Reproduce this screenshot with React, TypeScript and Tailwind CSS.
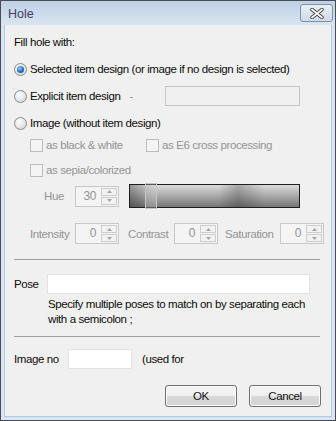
import type { ReactNode } from 'react'

const grayText = 'text-[#949494]'

function Radio({ checked }: { checked?: boolean }) {
  return (
    <span className="flex h-[13px] w-[13px] shrink-0 items-center justify-center rounded-full border border-[#8a8a8a] bg-[radial-gradient(circle_at_40%_35%,#ffffff,#e2e2e2_60%,#cfcfcf)]">
      {checked ? (
        <span className="h-[7px] w-[7px] rounded-full bg-[radial-gradient(circle_at_40%_35%,#8fd2ff,#1f6fc0_55%,#0d3f80)]" />
      ) : null}
    </span>
  )
}

function Check() {
  return <span className="h-[13px] w-[13px] shrink-0 border border-[#bcbcbc] bg-[#f4f4f4]" />
}

function Arrow({ up }: { up?: boolean }) {
  return (
    <svg width="5" height="3" viewBox="0 0 5 3">
      <path d={up ? 'M0 3 L2.5 0 L5 3 Z' : 'M0 0 L2.5 3 L5 0 Z'} fill="#a4a4a4" />
    </svg>
  )
}

function Spinner({ value, className }: { value: string; className?: string }) {
  return (
    <div
      className={`flex h-[21px] w-[44px] shrink-0 border border-[#c6c9cc] bg-[#f4f4f4] ${className ?? ''}`}
    >
      <div className={`flex-1 pr-[5px] text-right text-[12px] leading-[19px] ${grayText}`}>{value}</div>
      <div className="flex w-[17px] flex-col gap-[1px] py-[1px] pr-[1px]">
        <div className="flex flex-1 items-center justify-center border border-[#cdcdcd] bg-[#f2f2f2]">
          <Arrow up />
        </div>
        <div className="flex flex-1 items-center justify-center border border-[#cdcdcd] bg-[#f2f2f2]">
          <Arrow />
        </div>
      </div>
    </div>
  )
}

function Button({ children }: { children: ReactNode }) {
  return (
    <button
      type="button"
      className="h-[22px] w-[72px] rounded-[3px] border border-[#707070] bg-linear-to-b from-[#f2f2f2] from-45% to-[#d6d6d6] to-55% leading-[20px] text-[#111] shadow-[inset_0_0_0_1px_#fcfcfc]"
    >
      {children}
    </button>
  )
}

export default function App() {
  return (
    <div className="flex h-[421px] w-[336px] flex-col whitespace-nowrap border border-[#4c4c4c] bg-[#d9e5f2] font-['Liberation_Sans',Arial,sans-serif] text-[11.5px] leading-[16px] tracking-[-0.4px] text-[#0d0d0d]">
      {/* title bar */}
      <div className="flex h-[24px] shrink-0 items-start justify-between bg-linear-to-b from-[#c0d1e6] to-[#d8e4f1] pl-[7px] pr-[2px]">
        <div className="pt-[5px] text-[12.5px] leading-[16px] tracking-normal text-[#3f3f5e]">Hole</div>
        <div className="mt-[3px] flex h-[18px] w-[33px] items-center justify-center rounded-[3px] border border-[#7f8ea6] bg-linear-to-b from-[#e9eff6] to-[#cfdbea]">
          <svg width="14" height="11" viewBox="0 0 14 11">
            <path d="M2 1.5 L12 9.5 M12 1.5 L2 9.5" stroke="#4a4a4a" strokeWidth="3.6" strokeLinecap="round" />
            <path d="M2 1.5 L12 9.5 M12 1.5 L2 9.5" stroke="#f4f4f4" strokeWidth="1.8" strokeLinecap="round" />
          </svg>
        </div>
      </div>

      {/* body */}
      <div className="mx-[3px] mb-[3px] flex flex-1 flex-col border-x border-b border-[#b4c8df] bg-[#f0f0f0] pl-[9px] pt-[9px]">
        <div>Fill hole with:</div>

        <div className="mt-[11px] flex h-[16px] items-center gap-[3px]">
          <Radio checked />
          <span>Selected item design (or image if no design is selected)</span>
        </div>

        <div className="mt-[9px] flex h-[20px] items-center">
          <div className="flex w-[151px] items-center gap-[3px]">
            <Radio />
            <span>Explicit item design</span>
            <span className={`ml-[6px] ${grayText}`}>-</span>
          </div>
          <div className="h-[20px] w-[135px] border border-[#c2c6ca] bg-[#f0f0f0]" />
        </div>

        <div className="mt-[9px] flex h-[16px] items-center gap-[3px]">
          <Radio />
          <span>Image (without item design)</span>
        </div>

        <div className={`mt-[6px] flex h-[16px] items-center pl-[16px] ${grayText}`}>
          <div className="flex w-[116px] items-center gap-[3px]">
            <Check />
            <span>as black &amp; white</span>
          </div>
          <div className="flex items-center gap-[3px]">
            <Check />
            <span>as E6 cross processing</span>
          </div>
        </div>

        <div className={`mt-[9px] flex h-[16px] items-center gap-[3px] pl-[16px] ${grayText}`}>
          <Check />
          <span>as sepia/colorized</span>
        </div>

        <div className="mt-[5px] flex h-[26px] items-center">
          <div className={`w-[61px] pr-[11px] text-right ${grayText}`}>Hue</div>
          <Spinner value="30" />
          <div className="relative ml-[10px] h-[24px] w-[171px] border border-[#1e1e1e] bg-[linear-gradient(to_right,rgba(0,0,0,0.3)_0%,rgba(0,0,0,0)_14%,rgba(0,0,0,0)_52%,rgba(0,0,0,0.22)_64%,rgba(0,0,0,0)_80%),linear-gradient(to_bottom,#dcdcdc,#777777)]">
            <div className="absolute left-[15px] top-[-2px] h-[26px] w-[12px] border border-[#c8c8c8] bg-[rgba(200,200,200,0.35)]" />
          </div>
        </div>

        <div className={`mt-[14px] flex h-[21px] items-center pl-[16px] ${grayText}`}>
          <div className="w-[45px]">Intensity</div>
          <Spinner value="0" />
          <div className="ml-[9px] w-[46px]">Contrast</div>
          <Spinner value="0" />
          <div className="ml-[7px] w-[55px]">Saturation</div>
          <Spinner value="0" />
        </div>

        <div className="mt-[15px] h-px w-[306px] bg-[#a0a0a0]" />

        <div className="mt-[14px] flex h-[20px] items-center">
          <div className="w-[33px]">Pose</div>
          <div className="h-[20px] w-[263px] border border-[#dfe3e8] bg-white" />
        </div>

        <div className="mt-[3px] pl-[34px] leading-[15px]">
          <div>Specify multiple poses to match on by separating each</div>
          <div>with a semicolon ;</div>
        </div>

        <div className="mt-[9px] h-px w-[306px] bg-[#a0a0a0]" />

        <div className="mt-[12px] flex h-[20px] items-center">
          <div className="w-[54px]">Image no</div>
          <div className="h-[20px] w-[64px] border border-[#dfe3e8] bg-white" />
          <span className="ml-[10px]">(used for</span>
        </div>

        <div className="mt-[16px] flex justify-end gap-[12px] pr-[10px]">
          <Button>OK</Button>
          <Button>Cancel</Button>
        </div>
      </div>
    </div>
  )
}
